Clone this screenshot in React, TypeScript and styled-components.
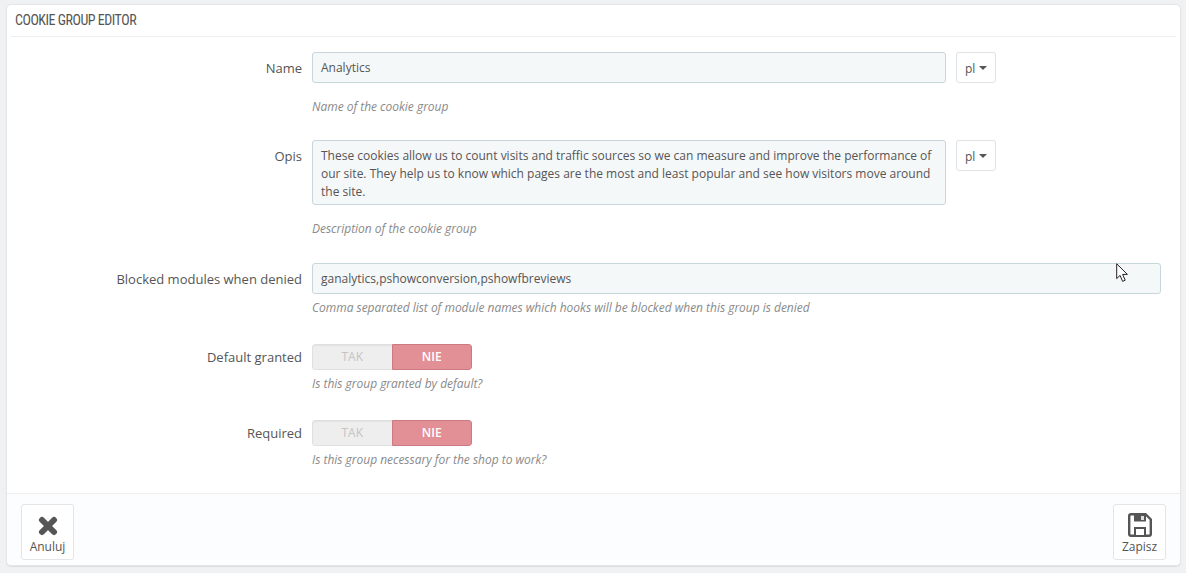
import React from "react";
import styled, { createGlobalStyle } from "styled-components";

const Global = createGlobalStyle`
  html, body { margin: 0; padding: 0; background: #eff1f2; height: 100%; overflow: hidden; }
  body { font-family: "Open Sans", "Liberation Sans", sans-serif; font-size: 12px; color: #555; }
`;
const Page = styled.div`
  position: relative;
  width: 1186px;
  height: 573px;
  padding: 4px 5px 7px 6px;
  box-sizing: border-box;
`;
const Panel = styled.section`
  height: 562px;
  background: #fff;
  border-radius: 5px;
  border: 1px solid #e6e6e6;
  box-sizing: border-box;
  box-shadow: 0 1px 1px rgba(0,0,0,.08);
  display: flex;
  flex-direction: column;
  overflow: hidden;
`;
const Heading = styled.h3`
  margin: 0 4px;
  height: 32px;
  box-sizing: border-box;
  padding: 7px 0 0 4px;
  border-bottom: 1px solid #eeeeee;
  font-family: "Liberation Sans Narrow", "Roboto Condensed", "Roboto", sans-serif;
  font-size: 14px;
  line-height: 16px;
  font-weight: 400;
  color: #555;
  letter-spacing: -.48px;
`;
const Form = styled.div`
  flex: 1;
  display: flex;
  flex-direction: column;
  padding-top: 15px;
`;
const Row = styled.div<{ $h: number }>`
  display: grid;
  grid-template-columns: 295px 1fr;
  column-gap: 10px;
  height: ${(p) => p.$h}px;
`;
const Label = styled.label`
  text-align: right;
  font-size: 13px;
  line-height: 33px;
  color: #555;
`;
const Field = styled.div`
  display: flex;
  flex-direction: column;
  align-items: flex-start;
`;
const Line = styled.div`
  display: flex;
  align-items: flex-start;
  gap: 10px;
`;
const Input = styled.div<{ $w: number }>`
  width: ${(p) => p.$w}px;
  height: 31px;
  box-sizing: border-box;
  background: #f5f8f9;
  border: 1px solid #c7d6db;
  border-radius: 3px;
  padding: 0 8px;
  font-size: 12px;
  line-height: 30px;
  color: #555;
`;
const TextArea = styled(Input)`
  height: 65px;
  padding: 6px 8px;
  line-height: 18px;
`;
const LangButton = styled.button`
  width: 40px;
  height: 31px;
  box-sizing: border-box;
  background: #fff;
  border: 1px solid #dfe3e5;
  border-radius: 3px;
  padding: 1px 0 0 8px;
  font: 12px "Open Sans", sans-serif;
  color: #555;
  display: flex;
  align-items: center;
  gap: 4px;
`;
const Caret = styled.span`
  width: 0;
  height: 0;
  border-left: 4px solid transparent;
  border-right: 4px solid transparent;
  border-top: 4px solid #555;
`;
const Help = styled.p<{ $top: number }>`
  margin: ${(p) => p.$top}px 0 0;
  font-size: 12px;
  line-height: 16px;
  font-style: italic;
  color: #8a8a8a;
  letter-spacing: -.02px;
`;
const Switch = styled.div`
  width: 160px;
  height: 26px;
  margin-top: 3px;
  display: flex;
  border-radius: 3px;
  overflow: hidden;
`;
const Off = styled.span`
  flex: 1;
  box-sizing: border-box;
  background: #eeeeee;
  border: 1px solid #e0e0e0;
  border-right: 0;
  border-radius: 3px 0 0 3px;
  box-shadow: inset 0 1px 1px rgba(0,0,0,.05);
  text-align: center;
  font-size: 12px;
  line-height: 24px;
  color: #c4c4c4;
`;
const On = styled.span`
  flex: 1;
  box-sizing: border-box;
  background: #e28f96;
  border: 1px solid #cc7a81;
  border-radius: 0 3px 3px 0;
  text-align: center;
  font-size: 12px;
  font-weight: 600;
  line-height: 24px;
  color: #fff;
`;
const Footer = styled.footer`
  height: 72px;
  flex: none;
  box-sizing: border-box;
  background: #fcfdfe;
  border-top: 1px solid #eeeeee;
  padding: 10px 14px 0;
  display: flex;
  justify-content: space-between;
  align-items: flex-start;
`;
const ActionButton = styled.button`
  width: 53px;
  height: 56px;
  box-sizing: border-box;
  background: #fff;
  border: 1px solid #e3e5e6;
  border-radius: 3px;
  padding: 8px 0 0;
  display: flex;
  flex-direction: column;
  align-items: center;
  gap: 2px;
  font: 12px/16px "Open Sans", sans-serif;
  color: #555;
`;
const Cursor = styled.svg`
  position: absolute;
  left: 1116px;
  top: 263px;
`;

const Lang = () => <LangButton>pl<Caret /></LangButton>;
const Toggle = () => <Switch><Off>TAK</Off><On>NIE</On></Switch>;

export default function App() {
  return (
    <Page>
      <Global />
      <Panel>
        <Heading>COOKIE GROUP EDITOR</Heading>
        <Form>
          <Row $h={88}>
            <Label>Name</Label>
            <Field>
              <Line><Input $w={634}>Analytics</Input><Lang /></Line>
              <Help $top={16}>Name of the cookie group</Help>
            </Field>
          </Row>
          <Row $h={123}>
            <Label>Opis</Label>
            <Field>
              <Line>
                <TextArea $w={634}>These cookies allow us to count visits and traffic sources so we can measure and improve the performance of our site. They help us to know which pages are the most and least popular and see how visitors move around the site.</TextArea>
                <Lang />
              </Line>
              <Help $top={16}>Description of the cookie group</Help>
            </Field>
          </Row>
          <Row $h={78}>
            <Label>Blocked modules when denied</Label>
            <Field>
              <Input $w={849}>ganalytics,pshowconversion,pshowfbreviews</Input>
              <Help $top={6}>Comma separated list of module names which hooks will be blocked when this group is denied</Help>
            </Field>
          </Row>
          <Row $h={76}>
            <Label>Default granted</Label>
            <Field>
              <Toggle />
              <Help $top={6}>Is this group granted by default?</Help>
            </Field>
          </Row>
          <Row $h={60}>
            <Label>Required</Label>
            <Field>
              <Toggle />
              <Help $top={6}>Is this group necessary for the shop to work?</Help>
            </Field>
          </Row>
        </Form>
        <Footer>
          <ActionButton>
            <svg width="20" height="24" viewBox="0 -3 20 24">
              <path d="M4 4 L16 16 M16 4 L4 16" stroke="#555" strokeWidth="6" strokeLinecap="round" />
            </svg>
            Anuluj
          </ActionButton>
          <ActionButton>
            <svg width="24" height="24" viewBox="0 0 24 24">
              <path d="M3 1.2 H17.5 L22.8 6.5 V21 A1.8 1.8 0 0 1 21 22.8 H3 A1.8 1.8 0 0 1 1.2 21 V3 A1.8 1.8 0 0 1 3 1.2 Z" fill="none" stroke="#555" strokeWidth="2.4" />
              <path d="M6 2 H18 V8.5 H6 Z M6 14 H18 V22.5 H6 Z" fill="#555" />
              <rect x="13" y="3" width="3" height="4" fill="#ddd" />
              <rect x="8" y="16" width="8" height="6" fill="#fff" />
            </svg>
            Zapisz
          </ActionButton>
        </Footer>
      </Panel>
      <Cursor width="13" height="20" viewBox="0 0 13 20">
        <path d="M.7 .8 V15.6 L4.1 12.4 L6.6 18.4 L9.2 17.2 L6.6 11.4 H11.4 Z" fill="#fff" stroke="#222" strokeWidth="1" strokeLinejoin="round" />
      </Cursor>
    </Page>
  );
}
